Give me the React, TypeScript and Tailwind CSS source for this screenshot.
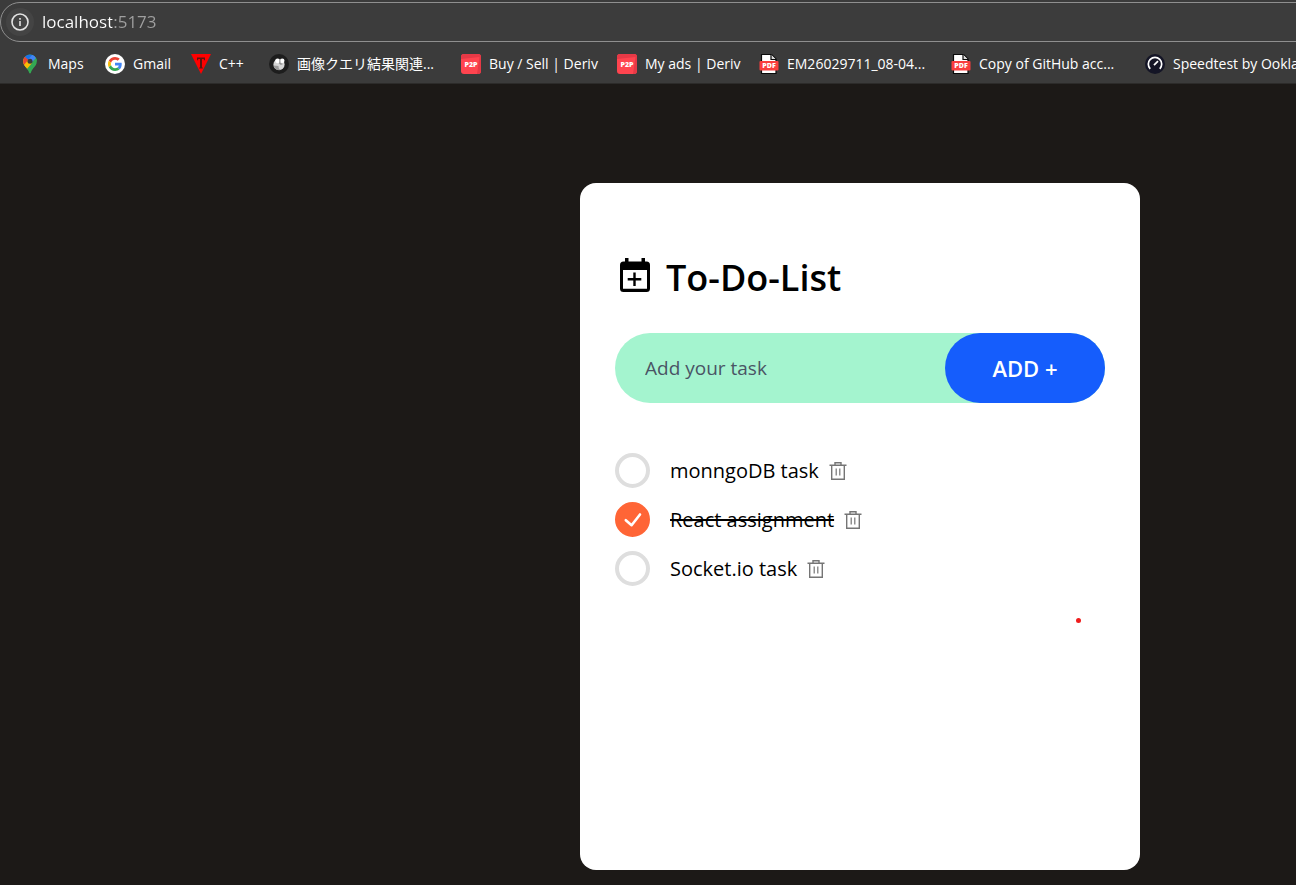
import { useState } from "react";
import type { FormEvent, ReactNode } from "react";

function MapsIcon() {
  return (
    <svg viewBox="0 0 20 20" className="size-5 shrink-0" aria-hidden="true">
      <defs>
        <clipPath id="pin">
          <path d="M10 0.5a6.8 6.8 0 0 0-6.8 6.8c0 3.2 1.700 4.800 3.500 7 1.300 1.600 1.900 2.700 2.400 4.500.3 1 1.500 1 1.800 0 .5-1.800 1.100-2.900 2.400-4.500 1.800-2.200 3.500-3.800 3.500-7A6.800 6.800 0 0 0 10 .5z" />
        </clipPath>
      </defs>
      <g clipPath="url(#pin)">
        <path d="M0 0h20v20H0z" fill="#34a853" />
        <path d="M4.500 3L10 7.500 4 14.500 0 10V4z" fill="#fbbc04" />
        <path d="M0 8.500V2h5l3.500 3.500-5 6z" fill="#ea4335" />
        <path d="M4.800 2.800L8 5.500 12 7.500 15.500 3 12 0H6z" fill="#1a73e8" />
        <path d="M10 7.500L15 1.500l3 4-9.500 11-4.500-2.500z" fill="#34a853" />
        <path d="M4 12.500L8.500 7l3.500 2-5.500 6.500z" fill="#fbbc04" />
        <path d="M8.500 5L13 0l3.500 3.500L12 8z" fill="#4285f4" />
      </g>
      <circle cx="10" cy="7.200" r="2.500" fill="#3b3b3b" />
    </svg>
  );
}

function GoogleIcon() {
  return (
    <svg viewBox="0 0 20 20" className="size-5 shrink-0" aria-hidden="true">
      <circle cx="10" cy="10" r="10" fill="#fff" />
      <g transform="translate(3 3) scale(0.292)">
        <path fill="#EA4335" d="M24 9.500c3.540 0 6.710 1.220 9.210 3.600l6.850-6.850C35.900 2.380 30.470 0 24 0 14.620 0 6.510 5.380 2.560 13.220l7.980 6.190C12.430 13.720 17.740 9.500 24 9.500z" />
        <path fill="#4285F4" d="M46.980 24.550c0-1.570-.15-3.090-.38-4.550H24v9.020h12.940c-.58 2.960-2.260 5.480-4.780 7.180l7.730 6c4.510-4.180 7.090-10.360 7.090-17.650z" />
        <path fill="#FBBC05" d="M10.530 28.590c-.48-1.450-.76-2.990-.76-4.590s.27-3.140.76-4.590l-7.980-6.190C.92 16.460 0 20.120 0 24c0 3.880.92 7.540 2.560 10.780l7.970-6.190z" />
        <path fill="#34A853" d="M24 48c6.480 0 11.930-2.130 15.890-5.810l-7.730-6c-2.150 1.450-4.920 2.300-8.160 2.300-6.260 0-11.570-4.220-13.470-9.910l-7.980 6.190C6.510 42.620 14.620 48 24 48z" />
      </g>
    </svg>
  );
}

function TriangleIcon() {
  return (
    <svg viewBox="0 0 20 20" className="size-5 shrink-0" aria-hidden="true">
      <path d="M0 0h20L10 20z" fill="#f00" />
      <path d="M6 3.500h8v2.700h-1.200V5h-1.800v8.500h.8v1H8.200v-1H9V5H7.200v1.200H6z" fill="#5a1410" />
    </svg>
  );
}

function AppleIcon() {
  return (
    <svg viewBox="0 0 20 20" className="size-5 shrink-0" aria-hidden="true">
      <circle cx="10" cy="10" r="10" fill="#1d1d1d" />
      <circle cx="10" cy="10.500" r="5.600" fill="#d6d6d6" />
      <path d="M4.500 11.500a5.800 5.800 0 0 0 7 4.500c-1.500-1-2-2-2-4z" fill="#9a9a9a" />
      <circle cx="8.600" cy="6.800" r="2.400" fill="#fff" />
      <circle cx="13.200" cy="6.800" r="2.300" fill="#fff" />
      <path d="M10.900 5v5h2.500" fill="none" stroke="#555" strokeWidth=".7" />
    </svg>
  );
}

function P2PIcon() {
  return (
    <svg viewBox="0 0 20 20" className="size-5 shrink-0" aria-hidden="true">
      <rect width="20" height="20" rx="3" fill="#ff444f" />
      <path d="M3 0h14a3 3 0 0 1 3 3v14a3 3 0 0 1-3 3h-1l2.500-17L0 5V3a3 3 0 0 1 3-3z" fill="#e63946" />
      <text x="10" y="12.600" textAnchor="middle" fontFamily="Open Sans, sans-serif" fontWeight="800" fontSize="7" fill="#fff">
        P2P
      </text>
    </svg>
  );
}

function PdfIcon() {
  return (
    <svg viewBox="0 0 20 20" className="size-5 shrink-0" aria-hidden="true">
      <path d="M2.500 .5h10l4.500 4.500v14.500h-14.500z" fill="#fff" stroke="#0a0a0a" strokeWidth="1.200" />
      <path d="M12 .5V5.500h5" fill="#ddd" stroke="#0a0a0a" strokeWidth="1.200" />
      <rect x=".5" y="7" width="19" height="9.500" rx="1" fill="#f93e3e" />
      <text x="10" y="14.400" textAnchor="middle" fontFamily="Open Sans, sans-serif" fontWeight="800" fontSize="7" fill="#fff">
        PDF
      </text>
    </svg>
  );
}

function SpeedIcon() {
  return (
    <svg viewBox="0 0 20 20" className="size-5 shrink-0" aria-hidden="true">
      <circle cx="10" cy="10" r="10" fill="#141526" />
      <path d="M5.200 14.800a6.700 6.700 0 1 1 9.600 0" fill="none" stroke="#fff" strokeWidth="1.700" />
      <path d="M9 11.200L13 7.200" stroke="#fff" strokeWidth="1.800" />
    </svg>
  );
}

function CalendarPlusIcon() {
  return (
    <svg viewBox="0 0 30 34" className="h-[34px] w-[30px] shrink-0" aria-hidden="true">
      <path
        fillRule="evenodd"
        d="M5 0h3.500v3.500h13V0H25v3.500h1.500A3.500 3.500 0 0 1 30 7v23.500a3.500 3.500 0 0 1-3.500 3.500h-23A3.500 3.500 0 0 1 0 30.500V7a3.500 3.500 0 0 1 3.500-3.500H5zM3 12v18.800h24V12z"
      />
      <path d="M14.500 14.500v13.500M7.700 21.200h13.600" stroke="#000" strokeWidth="2.400" />
    </svg>
  );
}

function TrashIcon() {
  return (
    <svg viewBox="0 0 18 18" className="size-[18px]" fill="none" stroke="#757575" strokeWidth="1.400" aria-hidden="true">
      <path d="M0.500 3.200h17M6 3V.8h6V3M2.700 3.200v14h12.600v-14" />
      <path d="M7.200 6.500v7M10.800 6.500v7" strokeWidth="1.200" />
    </svg>
  );
}

type Bookmark = { title: string; width: string; icon: ReactNode };

const bookmarks: Bookmark[] = [
  { title: "Maps", width: "w-[85px]", icon: <MapsIcon /> },
  { title: "Gmail", width: "w-[86px]", icon: <GoogleIcon /> },
  { title: "C++", width: "w-[78px]", icon: <TriangleIcon /> },
  { title: "画像クエリ結果関連...", width: "w-[192px]", icon: <AppleIcon /> },
  { title: "Buy / Sell | Deriv", width: "w-[156px]", icon: <P2PIcon /> },
  { title: "My ads | Deriv", width: "w-[142px]", icon: <P2PIcon /> },
  { title: "EM26029711_08-04...", width: "w-[192px]", icon: <PdfIcon /> },
  { title: "Copy of GitHub acc...", width: "w-[194px]", icon: <PdfIcon /> },
  { title: "Speedtest by Ookla", width: "w-[192px]", icon: <SpeedIcon /> },
];

function BrowserBar() {
  return (
    <header className="overflow-hidden border-b border-[#2c2b2a] bg-[#3b3b3b] pt-[2px] text-white">
      <div className="-mr-10 flex h-10 items-center rounded-l-full border border-[#8f8f8f] bg-[#3c3c3c] pl-[5px]">
        <button type="button" aria-label="Site information" className="flex size-7 items-center justify-center rounded-full bg-[#444]">
          <svg viewBox="0 0 18 18" className="size-[18px]" fill="none" stroke="#e3e3e3" strokeWidth="1.600" aria-hidden="true">
            <circle cx="9" cy="9" r="8" />
            <path d="M9 8v5M9 5v1.800" />
          </svg>
        </button>
        <input
          aria-label="Address"
          defaultValue="localhost:5173"
          className="ml-2 min-w-0 flex-1 bg-[linear-gradient(90deg,#ffffff_70px,#a0a0a0_70px)] bg-clip-text text-[17px] text-transparent outline-none"
        />
      </div>
      <nav className="flex h-[41px] items-center pt-[3px] pl-5 text-sm">
        {bookmarks.map((b) => (
          <a key={b.title} href="#" className={`flex shrink-0 items-center gap-2 whitespace-nowrap ${b.width}`}>
            {b.icon}
            {b.title}
          </a>
        ))}
      </nav>
    </header>
  );
}

type Task = { id: number; text: string; done: boolean };

export default function App() {
  const [tasks, setTasks] = useState<Task[]>([
    { id: 1, text: "monngoDB task", done: false },
    { id: 2, text: "React assignment", done: true },
    { id: 3, text: "Socket.io task", done: false },
  ]);
  const [draft, setDraft] = useState("");

  function addTask(e: FormEvent) {
    e.preventDefault();
    const text = draft.trim();
    if (!text) return;
    setTasks([...tasks, { id: Date.now(), text, done: false }]);
    setDraft("");
  }

  function toggle(id: number) {
    setTasks(tasks.map((t) => (t.id === id ? { ...t, done: !t.done } : t)));
  }

  return (
    <div className="flex min-h-screen flex-col bg-[#1c1917] font-['Open_Sans','Noto_Sans_CJK_JP',sans-serif]">
      <BrowserBar />
      <main className="flex flex-1 pt-[99px] pr-5 pb-[15px] pl-[580px]">
        <section className="relative w-full max-w-[560px] rounded-2xl bg-white px-[35px] pt-[70px]">
          <div className="flex h-12 items-start gap-4 pt-[5px] pl-[5px]">
            <CalendarPlusIcon />
            <h1 className="text-4xl font-semibold">To-Do-List</h1>
          </div>

          <form onSubmit={addTask} className="mt-8 flex h-[70px] rounded-full bg-[#a4f4cf]">
            <input
              aria-label="New task"
              placeholder="Add your task"
              value={draft}
              onChange={(e) => setDraft(e.target.value)}
              className="min-w-0 flex-1 pl-[30px] text-[19px] outline-none placeholder:text-[#4a5565]"
            />
            <button type="submit" className="w-40 rounded-full bg-[#155dfc] text-[22px] font-semibold text-white">
              ADD +
            </button>
          </form>

          <ul className="mt-[50px] flex flex-col gap-[14px]">
            {tasks.map((t) => (
              <li key={t.id} className="flex items-center gap-[10px]">
                <label className="flex items-center gap-5 text-xl leading-[35px]">
                  <span className="grid">
                    <input
                      type="checkbox"
                      checked={t.done}
                      onChange={() => toggle(t.id)}
                      className="peer col-start-1 row-start-1 size-[35px] appearance-none rounded-full border-4 border-[#dedede] checked:border-[#ff6536] checked:bg-[#ff6536]"
                    />
                    <svg
                      viewBox="0 0 35 35"
                      className="pointer-events-none invisible col-start-1 row-start-1 size-[35px] peer-checked:visible"
                      fill="none"
                      stroke="#fff"
                      strokeWidth="2.600"
                      strokeLinecap="round"
                      strokeLinejoin="round"
                      aria-hidden="true"
                    >
                      <path d="M10.800 18.200l5.800 5L25 12.500" />
                    </svg>
                  </span>
                  <span className={t.done ? "line-through decoration-2" : ""}>{t.text}</span>
                </label>
                <button type="button" aria-label={`Delete ${t.text}`} onClick={() => setTasks(tasks.filter((x) => x.id !== t.id))}>
                  <TrashIcon />
                </button>
              </li>
            ))}
          </ul>
          <span className="absolute top-[435px] right-[59px] size-[5px] rounded-full bg-[#ef1c1c]" />
        </section>
      </main>
    </div>
  );
}
